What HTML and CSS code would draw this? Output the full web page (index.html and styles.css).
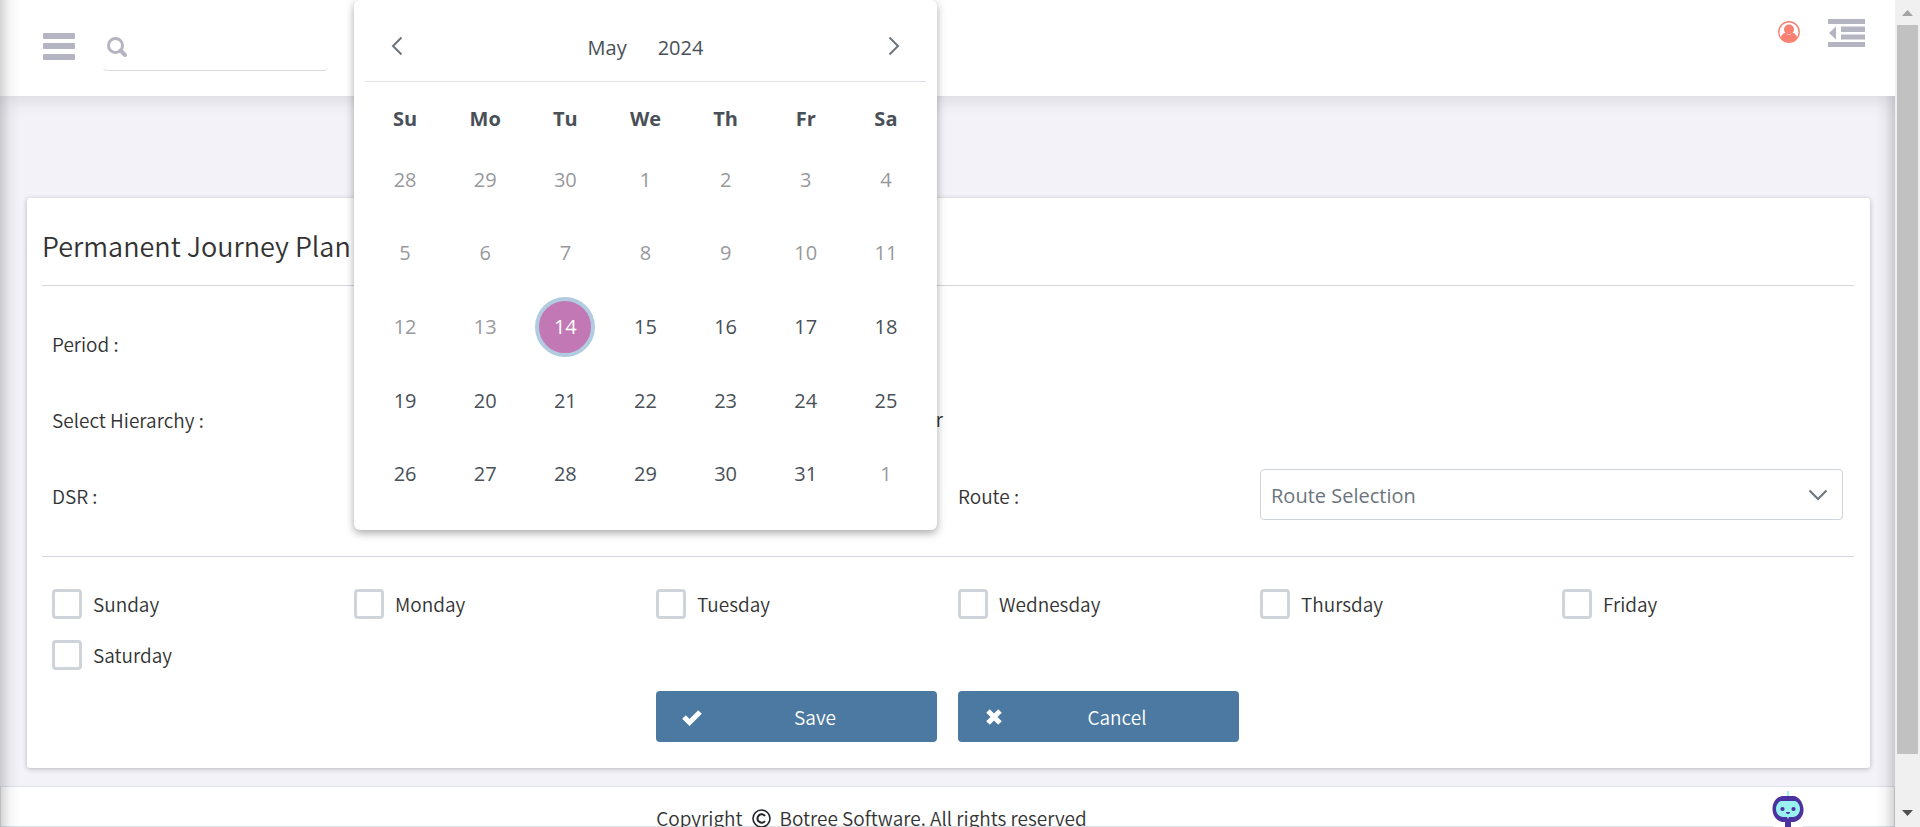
FILE: index.html
```html
<!DOCTYPE html>
<html lang="en">
<head>
<meta charset="utf-8">
<title>Permanent Journey Plan</title>
<link rel="stylesheet" href="styles.css">
</head>
<body>
<div class="app">
  <div class="page">
    <header class="topbar">
      <button class="icon-btn" type="button" aria-label="Menu">
        <svg width="32" height="27" viewBox="0 0 32 27"><g fill="#b5b4c2"><rect width="32" height="6" rx="1"/><rect y="10" width="32" height="6" rx="1"/><rect y="21" width="32" height="6" rx="1"/></g></svg>
      </button>
      <label class="search">
        <svg width="20" height="20" viewBox="0 0 20 20" fill="none" stroke="#b5b4c2"><circle cx="8.500" cy="8.500" r="7" stroke-width="3"/><path d="M13.500 13.500l4.500 4.500" stroke-width="4" stroke-linecap="round"/></svg>
        <input class="search-input" type="text" aria-label="Search">
      </label>
      <div class="top-actions">
        <button class="icon-btn" type="button" aria-label="Profile">
          <svg width="22" height="22" viewBox="0 0 22 22"><defs><clipPath id="disc"><circle cx="11" cy="11" r="10"/></clipPath></defs><g clip-path="url(#disc)" fill="#fa8072"><path d="M3 22v-5c0-3 2-5 5-5 1 1 2 2 3 2s2-1 3-2c3 0 5 2 5 5v5z"/><circle cx="11" cy="8.500" r="5"/></g><circle cx="11" cy="11" r="10.200" fill="none" stroke="#fa8072" stroke-width="1.400"/></svg>
        </button>
        <button class="icon-btn" type="button" aria-label="Toggle panel">
          <svg width="37" height="28" viewBox="0 0 37 28" fill="#b5b4c2"><rect width="37" height="5"/><rect x="13" y="7.500" width="24" height="5.500"/><rect x="13" y="15.500" width="24" height="5"/><rect y="23" width="37" height="5"/><path d="M8 7.500v13L1 14z"/></svg>
        </button>
      </div>
    </header>

    <main class="content">
      <section class="card">
        <h1 class="title">Permanent Journey Plan</h1>
        <form class="form">
          <div class="grid fields">
            <span class="label">Period :</span>
            <div class="cell wide period">
              <div class="calendar" role="dialog" aria-label="Choose date">
                <div class="cal-head">
                  <button class="icon-btn" type="button" aria-label="Previous month"><svg width="12" height="20" viewBox="0 0 12 20" fill="none" stroke="#6c757d" stroke-width="2"><path d="M10.500 1.500L2 10l8.500 8.500"/></svg></button>
                  <div class="cal-title"><button class="cal-pick" type="button">May</button><button class="cal-pick" type="button">2024</button></div>
                  <button class="icon-btn" type="button" aria-label="Next month"><svg width="12" height="20" viewBox="0 0 12 20" fill="none" stroke="#6c757d" stroke-width="2"><path d="M1.500 1.500L10 10l-8.500 8.500"/></svg></button>
                </div>
                <table class="cal-table">
                  <thead><tr><th>Su</th><th>Mo</th><th>Tu</th><th>We</th><th>Th</th><th>Fr</th><th>Sa</th></tr></thead>
                  <tbody>
                    <tr class="past"><td>28</td><td>29</td><td>30</td><td>1</td><td>2</td><td>3</td><td>4</td></tr>
                    <tr class="past"><td>5</td><td>6</td><td>7</td><td>8</td><td>9</td><td>10</td><td>11</td></tr>
                    <tr><td class="off">12</td><td class="off">13</td><td><span class="today">14</span></td><td>15</td><td>16</td><td>17</td><td>18</td></tr>
                    <tr><td>19</td><td>20</td><td>21</td><td>22</td><td>23</td><td>24</td><td>25</td></tr>
                    <tr><td>26</td><td>27</td><td>28</td><td>29</td><td>30</td><td>31</td><td class="off">1</td></tr>
                  </tbody>
                </table>
              </div>
            </div>
            <span class="label row-start">Select Hierarchy :</span>
            <div class="cell wide hierarchy"><label class="radio"><input type="radio" name="level">Distributor</label></div>
            <span class="label row-start">DSR :</span>
            <label class="label route-label" for="route">Route :</label>
            <div class="cell wide select-wrap">
              <select class="select" id="route"><option>Route Selection</option></select>
              <svg class="chevron" width="20" height="12" viewBox="0 0 20 12" fill="none" stroke="#6c757d" stroke-width="2"><path d="M1.500 1.500L10 10l8.500-8.500"/></svg>
            </div>
          </div>
          <div class="grid days">
            <label class="day"><input class="check" type="checkbox">Sunday</label>
            <label class="day"><input class="check" type="checkbox">Monday</label>
            <label class="day"><input class="check" type="checkbox">Tuesday</label>
            <label class="day"><input class="check" type="checkbox">Wednesday</label>
            <label class="day"><input class="check" type="checkbox">Thursday</label>
            <label class="day"><input class="check" type="checkbox">Friday</label>
            <label class="day"><input class="check" type="checkbox">Saturday</label>
          </div>
          <div class="grid actions">
            <button class="btn save" type="button"><svg width="22" height="18" viewBox="0 0 22 18" fill="none" stroke="#fff" stroke-width="5"><path d="M3 9l5.500 5.500L19 4"/></svg><span class="btn-label">Save</span></button>
            <button class="btn" type="button"><svg width="22" height="18" viewBox="0 0 22 18" fill="none" stroke="#fff" stroke-width="5"><path d="M5 3l12 12M17 3L5 15"/></svg><span class="btn-label">Cancel</span></button>
          </div>
        </form>
      </section>
    </main>

    <footer class="footer">
      <p class="copy">Copyright <svg width="19" height="19" viewBox="0 0 19 19" fill="none" stroke="#212529"><circle cx="9.500" cy="9.500" r="8.500" stroke-width="1.600"/><path d="M13 7a4.200 4.200 0 1 0 0 5" stroke-width="2"/></svg> Botree Software. All rights reserved</p>
    </footer>
    <button class="bot" type="button" aria-label="Chat assistant">
      <svg width="32" height="36" viewBox="0 0 32 36"><path d="M1 36a4 4 0 0 1 4-2h22a4 4 0 0 1 4 2z" fill="#fff"/><path d="M16 0v6" stroke="#99f2ef" stroke-width="2"/><path d="M10 5h12c5 1 9 6 9.500 13s-4 12-9.500 13h-3v5h-6v-5h-3C5 30 .5 25 .5 18S5 6 10 5z" fill="#4a32a0"/><path d="M9 10h14c3 1 5 4 5 8s-3 8-7 8h-4l-1 2-1-2h-4c-4 0-7-4-7-8s2-7 5-8z" fill="#99f2ef"/><g fill="#4a32a0"><circle cx="10.500" cy="18" r="2.100"/><circle cx="21.500" cy="18" r="2.100"/><path d="M14 21h4a2 2 0 0 1-4 0z"/></g></svg>
    </button>
  </div>
  <div class="scrollbar" aria-hidden="true">
    <svg width="11" height="6" viewBox="0 0 11 6" fill="#a3a3a3"><path d="M0 6L5.500 0 11 6z"/></svg>
    <div class="thumb"></div>
    <svg width="11" height="6" viewBox="0 0 11 6" fill="#505050"><path d="M0 0l5.500 6L11 0z"/></svg>
  </div>
</div>
</body>
</html>
```
FILE: styles.css
```css
* { box-sizing: border-box; }
body {
  margin: 0;
  overflow: hidden;
  background: #f3f2f8;
  color: #333;
  font: 350 19px/28px "Noto Sans CJK JP", sans-serif;
}
button, input, select { font: inherit; color: inherit; }
svg { display: block; flex: none; }
.icon-btn { display: block; padding: 0; border: 0; background: none; }

.app { display: flex; height: 100vh; overflow: hidden; }
.page { position: relative; flex: 1; min-width: 0; overflow: hidden; }
.page::before, .page::after {
  content: "";
  position: absolute;
  top: 0;
  bottom: 0;
  width: 20px;
  z-index: 4;
  pointer-events: none;
}
.page::before { left: 0; background: linear-gradient(to right, rgba(0, 0, 0, .17), rgba(0, 0, 0, .04) 50%, transparent); }
.page::after { right: 0; top: 96px; background: linear-gradient(to left, rgba(0, 0, 0, .17), rgba(0, 0, 0, .04) 50%, transparent); }

.topbar {
  display: flex;
  height: 96px;
  padding: 0 30px 0 43px;
  background: #fff;
  box-shadow: 0 0 20px rgba(69, 65, 78, .2);
}
.topbar > .icon-btn { align-self: flex-start; margin-top: 33px; }
.search {
  display: flex;
  align-items: flex-start;
  width: 225px;
  height: 51px;
  margin: 20px 0 0 28px;
  padding: 17px 4px 0;
  border-bottom: 1px solid #dcdbe3;
  border-radius: 4px;
}
.search-input { width: 100%; height: 24px; border: 0; background: none; }
.top-actions { display: flex; align-items: flex-start; gap: 28px; margin: 19px 0 0 auto; }
.top-actions .icon-btn:first-child { margin-top: 2px; }

.content { padding: 102px 25px 18px 27px; }
.card {
  padding: 16px 16px 26px 15px;
  background: #fff;
  border-radius: 3px;
  box-shadow: 0 1px 5px rgba(0, 0, 0, .25);
}
.title {
  margin: 0;
  padding: 12px 0 19px;
  border-bottom: 1px solid #d3d5df;
  font-size: 27px;
  font-weight: 350;
  line-height: 40px;
}
.grid { display: grid; grid-template-columns: repeat(6, 1fr); }
.fields {
  grid-auto-rows: 76px;
  align-items: center;
  padding: 20px 0 22px;
  border-bottom: 1px solid #d3d5df;
}
.label, .cell { padding: 0 11px 0 10px; }
.wide { grid-column: span 2; }
.row-start { grid-column: 1; }
.route-label { grid-column: 4; }
.period { position: relative; align-self: stretch; }
.hierarchy { display: flex; justify-content: flex-end; padding: 0 5px 3px; }
.radio { display: flex; align-items: center; gap: 8px; }

.calendar {
  position: absolute;
  z-index: 5;
  left: 10px;
  right: 11px;
  bottom: -148px;
  height: 530px;
  padding: 11px;
  background: #fff;
  border-radius: 6px;
  box-shadow: 0 3px 8px rgba(0, 0, 0, .35);
  color: #495057;
  font: 400 20px/28px "Open Sans", sans-serif;
}
.cal-head {
  display: flex;
  justify-content: space-between;
  align-items: center;
  height: 71px;
  padding: 0 26px 0 26px;
  border-bottom: 1px solid #dee2e6;
}
.cal-title { display: flex; gap: 31px; padding-top: 3px; }
.cal-pick { padding: 0; border: 0; background: none; font-weight: 500; }
.cal-table { width: 100%; height: 429px; table-layout: fixed; border-collapse: collapse; text-align: center; }
.cal-table th { height: 61px; padding: 12px 0 0; font-weight: 700; }
.cal-table td { height: 73px; padding: 0; }
.past, .off { color: #98999d; }
.today {
  display: grid;
  place-items: center;
  width: 60px;
  height: 60px;
  margin: 0 auto;
  border: 4px solid #b1cbe0;
  border-radius: 50%;
  background: #c278b5;
  color: #fff;
  font-weight: 500;
}

.select-wrap { position: relative; padding-bottom: 3px; }
.select {
  display: block;
  width: 100%;
  height: 51px;
  padding: 2px 10px 0;
  border: 1px solid #ced4da;
  border-radius: 4px;
  background: #fff;
  color: #6c757d;
  font: 400 20px/28px "Open Sans", sans-serif;
  appearance: none;
}
.chevron { position: absolute; right: 26px; top: 20px; pointer-events: none; }

.days { row-gap: 21px; padding: 32px 0 21px; }
.day { display: flex; align-items: center; gap: 11px; height: 30px; padding: 0 10px; }
.check {
  width: 30px;
  height: 30px;
  margin: 0;
  border: 3px solid #ced4da;
  border-radius: 4px;
  background: #fff;
  appearance: none;
}
.btn {
  display: flex;
  align-items: center;
  gap: 15px;
  height: 51px;
  margin: 0 11px 0 10px;
  padding: 0 25px;
  border: 0;
  border-radius: 4px;
  background: #4b79a1;
  color: #fff;
}
.save { grid-column: 3; }
.btn-label { flex: 1; text-align: center; }

.footer {
  height: 41px;
  padding-top: 17px;
  background: #fff;
  border: 1px solid #dce0e8;
}
.copy { display: flex; justify-content: center; align-items: center; gap: 9px; margin: 0; padding-right: 152px; }
.bot { position: absolute; right: 91px; bottom: 0; padding: 0; border: 0; background: none; }

.scrollbar {
  display: flex;
  flex-direction: column;
  align-items: center;
  width: 25px;
  padding: 10px 2px 11px;
  background: #f0f0f0;
}
.thumb { width: 100%; margin: 9px 0 56px; flex: 1; background: #c1c1c1; }
```
